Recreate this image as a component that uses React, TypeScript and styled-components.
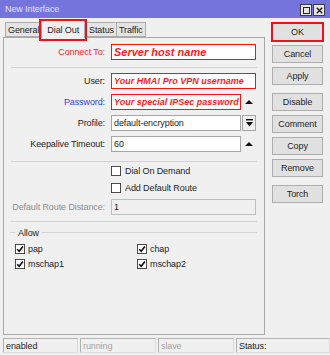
import React from 'react';
import styled, { createGlobalStyle } from 'styled-components';

const GlobalStyle = createGlobalStyle`
  html, body {
    margin: 0;
    padding: 0;
    background: #f0f0f0;
  }
  body {
    font-family: 'Liberation Sans', Arial, sans-serif;
  }
`;

const ANNOTATION_RED = '#e8141e';

const Window = styled.div`
  width: 330px;
  height: 355px;
  display: flex;
  flex-direction: column;
  background: #f0f0f0;
  font-size: 9px;
  letter-spacing: -0.1px;
  color: #1e1e1e;
  overflow: hidden;
`;

const TitleBar = styled.div`
  flex: none;
  height: 18px;
  display: flex;
  align-items: center;
  justify-content: space-between;
  padding: 0 5px 0 5px;
  background: #7474dc;
  color: #e2e2fa;
`;

const TitleButtons = styled.div`
  display: flex;
  gap: 1px;
  margin-top: 2px;
`;

const TitleButton = styled.div`
  width: 12px;
  height: 12px;
  box-sizing: border-box;
  border: 1px solid #3c3c3c;
  background: #e6e6e6;
  display: flex;
  align-items: center;
  justify-content: center;
`;

const Body = styled.div`
  flex: 1;
  display: flex;
  gap: 7px;
  padding: 1px 7px 0 3px;
  min-height: 0;
`;

const LeftPane = styled.div`
  width: 262px;
  display: flex;
  flex-direction: column;
`;

const TabRow = styled.div`
  height: 18px;
  display: flex;
  align-items: flex-end;
  padding-left: 2px;
`;

const Tab = styled.div<{ active?: boolean }>`
  position: relative;
  box-sizing: border-box;
  height: ${({ active }) => (active ? 18 : 15)}px;
  padding: 0 ${({ active }) => (active ? 5 : 2)}px;
  margin: 0 ${({ active }) => (active ? 2 : 0)}px ${({ active }) => (active ? -1 : 0)}px 0;
  border: 1px solid #acacac;
  border-bottom: ${({ active }) => (active ? 'none' : '1px solid #acacac')};
  background: ${({ active }) => (active ? '#f0f0f0' : '#e4e4e4')};
  display: flex;
  align-items: center;
  white-space: nowrap;
  z-index: ${({ active }) => (active ? 2 : 1)};
  & + & {
    margin-left: -1px;
  }
  ${({ active }) =>
    active &&
    `
    &::after {
      content: '';
      position: absolute;
      left: -3px;
      right: -3px;
      top: -2px;
      bottom: -3px;
      border: 2px solid ${ANNOTATION_RED};
    }
  `}
`;

const Panel = styled.div`
  flex: 1;
  border: 1px solid #a9a9a9;
  background: #f0f0f0;
  padding: 6px 7px 0 0;
  display: flex;
  flex-direction: column;
`;

const Row = styled.div<{ gapTop?: number }>`
  display: grid;
  grid-template-columns: 101px 145px;
  column-gap: 6px;
  height: 16px;
  align-items: center;
  margin-top: ${({ gapTop }) => gapTop ?? 0}px;
`;

const Label = styled.div<{ tone?: 'red' | 'blue' | 'muted' }>`
  text-align: right;
  white-space: nowrap;
  color: ${({ tone }) =>
    tone === 'red' ? '#f02828' : tone === 'blue' ? '#3d3de6' : tone === 'muted' ? '#8e8e8e' : '#1e1e1e'};
`;

const Field = styled.div`
  display: flex;
  align-items: center;
  height: 16px;
`;

const Input = styled.div<{ short?: boolean; highlight?: boolean; big?: boolean; disabled?: boolean }>`
  box-sizing: border-box;
  width: ${({ short }) => (short ? 130 : 145)}px;
  height: ${({ short }) => (short ? 16 : 16)}px;
  border: 1px solid ${({ highlight, disabled }) => (highlight ? '#ff1010' : disabled ? '#bdbdbd' : '#a6a6a6')};
  background: ${({ disabled }) => (disabled ? '#f0f0f0' : '#ffffff')};
  padding: 0 2px;
  display: flex;
  align-items: center;
  white-space: nowrap;
  overflow: hidden;
  color: ${({ highlight }) => (highlight ? '#ff1a1a' : '#1e1e1e')};
  font-weight: ${({ highlight }) => (highlight ? 700 : 400)};
  font-style: ${({ highlight }) => (highlight ? 'italic' : 'normal')};
  font-size: ${({ big }) => (big ? 11 : 9)}px;
  letter-spacing: ${({ highlight }) => (highlight ? '0' : '-0.1px')};
`;

const Trailing = styled.div`
  width: 15px;
  height: 16px;
  display: flex;
  align-items: center;
  justify-content: center;
`;

const UpArrow = styled.div`
  width: 0;
  height: 0;
  border-left: 4px solid transparent;
  border-right: 4px solid transparent;
  border-bottom: 4px solid #111;
`;

const DropButton = styled.div`
  box-sizing: border-box;
  width: 14px;
  height: 16px;
  margin-left: 1px;
  border: 1px solid #a6a6a6;
  background: #f0f0f0;
  display: flex;
  align-items: center;
  justify-content: center;
`;

const Separator = styled.div<{ top: number; bottom: number }>`
  height: 1px;
  background: #d4d4d4;
  margin: ${({ top }) => top}px 0 ${({ bottom }) => bottom}px 7px;
`;

const CheckLine = styled.label`
  display: flex;
  align-items: center;
  gap: 4px;
  height: 16px;
  white-space: nowrap;
`;

const Box = styled.span`
  box-sizing: border-box;
  width: 10px;
  height: 10px;
  border: 1px solid #4a4a4a;
  background: #ffffff;
  display: flex;
  align-items: center;
  justify-content: center;
`;

const Group = styled.div`
  margin-top: 6px;
`;

const Legend = styled.div`
  height: 9px;
  display: flex;
  align-items: center;
  gap: 3px;
  padding-left: 6px;
  &::before {
    content: '';
    width: 5px;
    height: 1px;
    background: #d4d4d4;
  }
  &::after {
    content: '';
    flex: 1;
    height: 1px;
    background: #d4d4d4;
  }
`;

const AllowGrid = styled.div`
  display: grid;
  grid-template-columns: 122px 1fr;
  grid-auto-rows: 14px;
  row-gap: 1px;
  margin-top: 5px;
  padding-left: 11px;
  & > label {
    height: 14px;
    gap: 3px;
  }
`;

const ButtonColumn = styled.div`
  width: 51px;
  padding-top: 4px;
  display: flex;
  flex-direction: column;
`;

const ButtonGroup = styled.div`
  display: flex;
  flex-direction: column;
  gap: 4px;
  & + & {
    margin-top: 8px;
  }
`;

const Button = styled.div<{ marked?: boolean }>`
  box-sizing: border-box;
  height: 18px;
  border: 1px solid #adadad;
  background: #e1e1e1;
  display: flex;
  align-items: center;
  justify-content: center;
  outline: ${({ marked }) => (marked ? `2px solid ${ANNOTATION_RED}` : 'none')};
  outline-offset: -1px;
`;

const StatusBar = styled.div`
  flex: none;
  height: 20px;
  box-sizing: border-box;
  padding: 3px 0 2px 3px;
  display: grid;
  grid-template-columns: 75px 76px 76px 1fr;
  gap: 2px;
`;

const StatusCell = styled.div<{ muted?: boolean }>`
  box-sizing: border-box;
  border: 1px solid #b2b2b2;
  border-right-color: #dcdcdc;
  border-bottom-color: #dcdcdc;
  padding-left: 2px;
  display: flex;
  align-items: center;
  color: ${({ muted }) => (muted ? '#a4a4a4' : '#1e1e1e')};
`;

const Check = () => (
  <svg width="8" height="8" viewBox="0 0 8 8">
    <path d="M1.2 4.2 L3.2 6.3 L6.9 1.4" fill="none" stroke="#111" strokeWidth="1.6" />
  </svg>
);

const CheckBox = ({ checked, label }: { checked?: boolean; label: string }) => (
  <CheckLine>
    <Box>{checked && <Check />}</Box>
    {label}
  </CheckLine>
);

const DropIcon = () => (
  <svg width="7" height="8" viewBox="0 0 7 8">
    <rect x="0" y="0" width="7" height="1.4" fill="#111" />
    <path d="M0 3 H7 L3.5 7.5 Z" fill="#111" />
  </svg>
);

export default function App() {
  return (
    <>
      <GlobalStyle />
      <Window>
        <TitleBar>
          <span>New Interface</span>
          <TitleButtons>
            <TitleButton>
              <svg width="7" height="7" viewBox="0 0 7 7">
                <rect x="0.5" y="0.5" width="6" height="6" fill="none" stroke="#222" strokeWidth="1" />
              </svg>
            </TitleButton>
            <TitleButton>
              <svg width="7" height="7" viewBox="0 0 7 7">
                <path d="M0.8 0.8 L6.2 6.2 M6.2 0.8 L0.8 6.2" stroke="#222" strokeWidth="1.5" />
              </svg>
            </TitleButton>
          </TitleButtons>
        </TitleBar>
        <Body>
          <LeftPane>
            <TabRow>
              <Tab>General</Tab>
              <Tab active>Dial Out</Tab>
              <Tab>Status</Tab>
              <Tab>Traffic</Tab>
            </TabRow>
            <Panel>
              <Row>
                <Label tone="red">Connect To:</Label>
                <Field>
                  <Input highlight big>Server host name</Input>
                </Field>
              </Row>
              <Separator top={7} bottom={5} />
              <Row>
                <Label>User:</Label>
                <Field>
                  <Input highlight>Your HMA! Pro VPN username</Input>
                </Field>
              </Row>
              <Row gapTop={5}>
                <Label tone="blue">Password:</Label>
                <Field>
                  <Input short highlight>Your special IPSec password</Input>
                  <Trailing>
                    <UpArrow />
                  </Trailing>
                </Field>
              </Row>
              <Row gapTop={5}>
                <Label>Profile:</Label>
                <Field>
                  <Input short>default-encryption</Input>
                  <DropButton>
                    <DropIcon />
                  </DropButton>
                </Field>
              </Row>
              <Row gapTop={5}>
                <Label>Keepalive Timeout:</Label>
                <Field>
                  <Input short>60</Input>
                  <Trailing>
                    <UpArrow />
                  </Trailing>
                </Field>
              </Row>
              <Separator top={9} bottom={1} />
              <Row>
                <span />
                <CheckBox label="Dial On Demand" />
              </Row>
              <Row gapTop={1}>
                <span />
                <CheckBox label="Add Default Route" />
              </Row>
              <Row gapTop={3}>
                <Label tone="muted">Default Route Distance:</Label>
                <Field>
                  <Input disabled>1</Input>
                </Field>
              </Row>
              <Separator top={6} bottom={0} />
              <Group>
                <Legend>Allow</Legend>
                <AllowGrid>
                  <CheckBox checked label="pap" />
                  <CheckBox checked label="chap" />
                  <CheckBox checked label="mschap1" />
                  <CheckBox checked label="mschap2" />
                </AllowGrid>
              </Group>
            </Panel>
          </LeftPane>
          <ButtonColumn>
            <ButtonGroup>
              <Button marked>OK</Button>
              <Button>Cancel</Button>
              <Button>Apply</Button>
            </ButtonGroup>
            <ButtonGroup>
              <Button>Disable</Button>
              <Button>Comment</Button>
              <Button>Copy</Button>
              <Button>Remove</Button>
            </ButtonGroup>
            <ButtonGroup>
              <Button>Torch</Button>
            </ButtonGroup>
          </ButtonColumn>
        </Body>
        <StatusBar>
          <StatusCell>enabled</StatusCell>
          <StatusCell muted>running</StatusCell>
          <StatusCell muted>slave</StatusCell>
          <StatusCell>Status:</StatusCell>
        </StatusBar>
      </Window>
    </>
  );
}
